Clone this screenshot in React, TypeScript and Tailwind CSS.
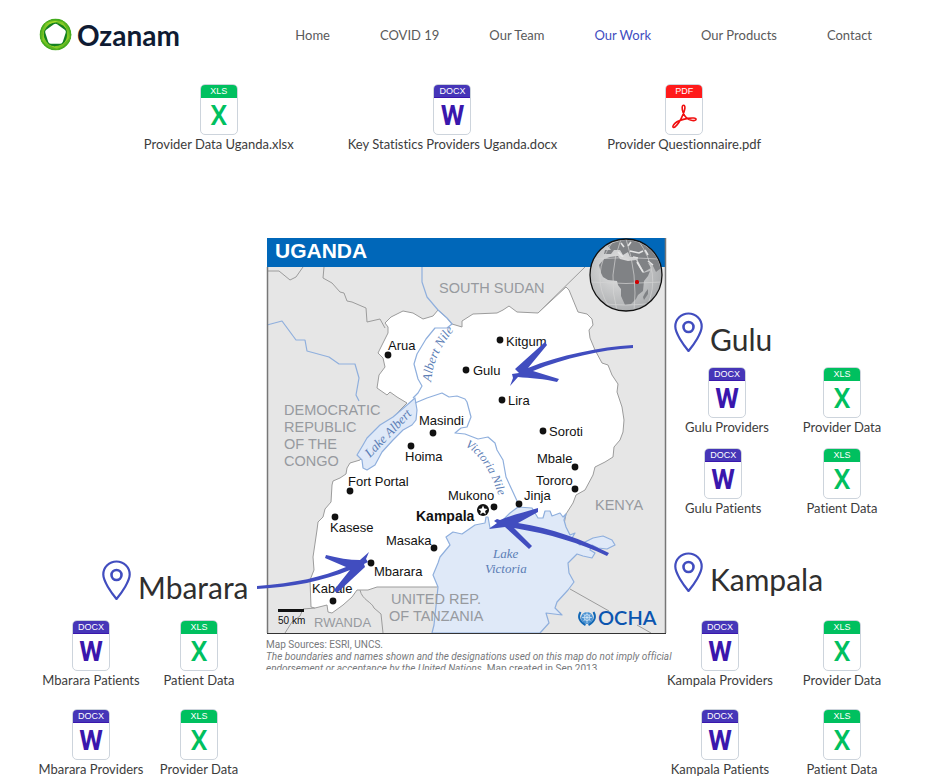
type Kind = "DOCX" | "XLS" | "PDF";

const band: Record<Kind, string> = {
  DOCX: "bg-[#4636b8] shadow-[inset_0_-1px_#3a17ad]",
  XLS: "bg-[#00c05f]",
  PDF: "bg-[#ff1a1a]",
};

function FileIcon({ kind }: { kind: Kind }) {
  return (
    <span className="flex h-[51px] w-[38px] flex-col overflow-hidden rounded-[5px] border border-[#cdd4dc] bg-white">
      <span
        className={`-mx-px -mt-px flex h-[14px] shrink-0 items-center justify-center font-['Liberation_Sans',Arial,sans-serif] text-[9px] leading-[14px] text-white ${band[kind]}`}
      >
        {kind}
      </span>
      <span className="flex flex-1 items-center justify-center font-['Roboto',sans-serif] text-[27px] leading-[30px]">
        {kind === "DOCX" && <span className="font-bold text-[#3a17ad]">W</span>}
        {kind === "XLS" && <span className="font-medium text-[#00c05f]">X</span>}
        {kind === "PDF" && (
          <svg width="26" height="26" viewBox="0 0 26 26" fill="none" stroke="#f01010" strokeWidth="1.6" strokeLinejoin="round" aria-hidden="true">
            <path d="M12.600 2.200c-1.800 0-1.800 3.600-.5 7.200 1.300 3.500 4.300 6.900 8.200 7.900 2.400.6 4.800.2 4.800-1 0-1.400-3.800-1.700-8.300-.9-4.500.8-10.300 2.500-12.900 5-1.900 1.800-2.600 3.700-1.500 4 1.700.4 5.400-4.300 7.600-8.600 2-4 3.700-8 3.900-10.700.1-1.800-.4-2.900-1.300-2.900z" />
          </svg>
        )}
      </span>
    </span>
  );
}

function FileLink({ kind, name }: { kind: Kind; name: string }) {
  return (
    <a href="#" className="flex flex-col items-center text-[13px] leading-[18px] whitespace-nowrap text-[#3c3c3c]">
      <FileIcon kind={kind} />
      {name}
    </a>
  );
}

function PlaceTitle({ name }: { name: string }) {
  return (
    <div className="flex items-start gap-[7px]">
      <svg width="29" height="40" viewBox="0 0 29 40" fill="none" stroke="#414dbf" strokeWidth="2.200" aria-hidden="true">
        <path d="M14.500 1.500C7.200 1.500 1.300 7.400 1.300 14.500c0 3.300 1.700 7.300 4.500 12.200 2.600 4.400 5.800 8.800 8.700 12.300 2.900-3.500 6.100-7.900 8.700-12.300 2.800-4.900 4.500-8.900 4.500-12.200 0-7.100-5.900-13-13.200-13z" />
        <circle cx="14.500" cy="15" r="5" strokeWidth="2.600" />
      </svg>
      <h2 className="pt-[7px] text-[30px] leading-[40px] text-[#2f2f2f]">{name}</h2>
    </div>
  );
}

const blades = [0, 72, 144, 216, 288];

function Logo() {
  return (
    <a href="#" className="flex items-center gap-[5px] text-[28px] leading-[32px] font-bold text-[#0f1b33]">
      <svg width="33" height="33" viewBox="0 0 33 33" aria-hidden="true">
        <defs>
          <linearGradient id="lit" x1="0" y1="0" x2="1" y2="0.6">
            <stop offset="0" stopColor="#3fa51d" />
            <stop offset="1" stopColor="#a6dc2a" />
          </linearGradient>
          <clipPath id="disc"><circle cx="16.500" cy="16.500" r="16" /></clipPath>
        </defs>
        <g clipPath="url(#disc)">
          <circle cx="16.500" cy="16.500" r="16" fill="#43ab1d" />
          {blades.map((a) => (
            <g key={a} transform={`rotate(${a} 16.500 16.500)`}>
              <path d="M2 8Q11-1 24 4Q29 8 30 15Q24 5 15.500 4.500Q8 4.500 2 8z" fill="url(#lit)" />
              <path d="M10 6.500Q17 3 24 7.500Q27 10 28.500 15L25 12.500Q18 6 10 6.500z" fill="#148021" />
            </g>
          ))}
        </g>
        <path d="M16.500 8.500l7.600 5.500-2.900 9h-9.400l-2.900-9z" fill="#fff" stroke="#fff" strokeWidth="5.500" strokeLinejoin="round" />
      </svg>
      Ozanam
    </a>
  );
}

const towns: [string, number, number, number, number][] = [
  ["Arua", 388, 355, 388, 350],
  ["Kitgum", 500, 340, 506, 346],
  ["Gulu", 466, 370, 473, 375],
  ["Lira", 502, 400, 508, 405],
  ["Masindi", 433, 433, 419, 425],
  ["Soroti", 543, 431, 549, 436],
  ["Hoima", 411, 446, 405, 461],
  ["Mbale", 575, 467, 537, 463],
  ["Tororo", 575, 489, 536, 485],
  ["Fort Portal", 350, 491, 348, 486],
  ["Kasese", 335, 517, 330, 532],
  ["Mukono", 494, 507, 448, 500],
  ["Jinja", 519, 504, 524, 500],
  ["Masaka", 434, 548, 386, 545],
  ["Mbarara", 371, 563, 374, 576],
  ["Kabale", 333, 601, 312, 593],
];

const countries: [string, number, number][] = [
  ["SOUTH SUDAN", 439, 293],
  ["DEMOCRATIC", 284, 415],
  ["REPUBLIC", 284, 432],
  ["OF THE", 284, 449],
  ["CONGO", 284, 466],
  ["KENYA", 595, 510],
  ["UNITED REP.", 391, 604],
  ["OF TANZANIA", 389, 621],
];

function UgandaMap() {
  return (
    <svg
      viewBox="266 238 400 396"
      className="relative block w-full overflow-visible"
      fontFamily="'Liberation Sans', Arial, sans-serif"
      role="img"
      aria-label="Map of Uganda"
    >
      <rect x="267" y="238" width="399" height="395" fill="#e6e6e6" />
      <g fill="none" stroke="#9c9c9c" strokeWidth="1">
        <path d="M267 271L279 271L290 280L296 277L303 267M324 267L323 278L332 283L340 292L344 293L347 301L352 302L366 308L367 322L380 319L385 328" />
        <path d="M538 313L585 267M360 590C362 600 372 602 374 608L381 614L383 633M315 608L303 609L300 616L292 622L285 633M570 589L609 611M637 625L651 633" />
      </g>
      <path
        d="M388 327L385 323L391 317L403 311L413 313L423 319L433 316L438 310L447 318L452 324L462 327L462 321L473 314L497 313L503 310L509 306L517 312L538 313L566 287L569 290L578 312L587 314L592 319L593 325L589 330L590 338L595 350L602 363L608 365L612 375L618 384L617 392L622 407L624 420L623 432L620 440L614 447L613 457L605 462L595 467L593 475L585 490L576 495L573 503L566 514L560 545L480 560L437 587L377 587L368 590L357 590L352 597L343 605L332 613L328 612L327 605L315 608L311 607L310 580L314 570L313 557L317 530L318 522L323 517L325 509L331 502L332 485L333 481L340 478L346 474L347 468L350 463L360 460L400 410L407 403L397 397L390 392L387 395L377 388L379 375L385 367L383 358L378 353L382 345L388 333z"
        fill="#fff"
        stroke="#9c9c9c"
      />
      <g fill="#dfe9f8" stroke="#8fafdd" strokeWidth="1.200" strokeLinejoin="round">
        <path d="M357 455L363 445L367 438L380 425L393 417L407 405L415 398L417 410L416 420L412 425L403 430L393 440L382 452L375 465L367 470L363 468L362 460z" />
        <path d="M432 633L434 625L438 587L433 575L438 563L440 557L450 545L446 537L453 532L462 534L475 525L485 523L486 517L488 517L490 528L500 523L510 513L518 507L532 508L535 513L538 518L543 518L545 511L550 511L552 516L560 513L563 517L566 514L564 520L566 527L570 535L575 533L572 538L580 545L585 542L593 538L603 536L612 540L615 545L607 549L598 548L592 545L590 550L595 553L592 558L583 556L577 554L568 563L569 573L574 582L568 590L557 602L555 608L562 615L546 613L549 623L540 633z" />
        <path fill="none" d="M422 267V282L427 297L438 310L447 318L452 324L447 328L435 328L426 339L417 354L414 364L418 379L422 386L418 393L413 398M415 403L427 398L442 393L449 397L457 396L465 399L467 402L471 417L467 427L461 428L455 433L465 434L478 439L488 437L495 443L497 450L503 460L506 477L512 490L518 503" />
        <path fill="none" d="M267 325L282 321L296 340L305 340L307 351L329 357L339 364L355 364L359 378L356 395L359 401" />
      </g>
      <g fill="#979a9f" fontSize="14.500">
        {countries.map(([name, x, y]) => (
          <text key={name} x={x} y={y}>{name}</text>
        ))}
        <text x="314" y="627" fontSize="13">RWANDA</text>
      </g>
      <g fill="#5b7db5" fontFamily="'Liberation Serif', serif" fontStyle="italic" fontSize="13">
        <path id="albert-nile" d="M431 382Q434 352 456 328" fill="none" />
        <path id="victoria-nile" d="M465 446Q490 460 502 508" fill="none" />
        <text><textPath href="#albert-nile">Albert Nile</textPath></text>
        <text fontSize="12"><textPath href="#victoria-nile">Victoria Nile</textPath></text>
        <text transform="translate(370 458) rotate(-46)">Lake Albert</text>
        <text x="493" y="558">Lake</text>
        <text x="485" y="573">Victoria</text>
      </g>
      <g fill="#111" fontSize="13">
        {towns.map(([name, cx, cy, x, y]) => (
          <g key={name}>
            <circle cx={cx} cy={cy} r="3.400" />
            <text x={x} y={y}>{name}</text>
          </g>
        ))}
        <text x="416" y="521" fontSize="14" fontWeight="700">Kampala</text>
        <circle cx="483" cy="510" r="6" />
        <path d="M483 505.500l1.300 3.100 3.300.3-2.500 2.200.8 3.300-2.900-1.800-2.900 1.800.8-3.300-2.500-2.200 3.300-.3z" fill="#fff" />
        <rect x="278" y="609" width="26" height="3" />
        <text x="278" y="624" fontSize="10">50 km</text>
      </g>
      <g>
        <circle cx="587" cy="618" r="6" fill="#4a92d2" />
        <path d="M580.500 612c-3 5-1 10 5 13M593.500 612c3 5 1 10-5 13" fill="none" stroke="#1167b5" strokeWidth="2" />
        <circle cx="587" cy="617.500" r="3" fill="none" stroke="#d9e9f7" strokeWidth="0.800" />
        <path d="M582 617.500h10M587 612v11M583.500 614l7 7M590.500 614l-7 7" stroke="#d9e9f7" strokeWidth="0.700" />
        <text x="598" y="625" fill="#0b55b0" fontFamily="Lato, sans-serif" fontSize="20" fontWeight="600">OCHA</text>
      </g>
      <rect x="267" y="238" width="399" height="29" fill="#0067b9" />
      <text x="275" y="258" fill="#fff" fontSize="21" fontWeight="700">UGANDA</text>
      <path d="M267.500 267v366M665.500 238v395" stroke="#777" strokeWidth="1.500" />
      <path d="M267 633.500h399" stroke="#333" />
      <defs>
        <radialGradient id="sea" cx="0.4" cy="0.4" r="0.65">
          <stop offset="0" stopColor="#e6e6e6" />
          <stop offset="1" stopColor="#a9abad" />
        </radialGradient>
        <clipPath id="globe"><circle cx="626" cy="275" r="35" /></clipPath>
      </defs>
      <circle cx="626" cy="275" r="36" fill="url(#sea)" stroke="#111" strokeWidth="1.300" />
      <g clipPath="url(#globe)">
        <g fill="#808285">
          <path d="M599 265L604 259L610 257L618 256L620 259L624 260L628 261L636 260L640 268L643 273L650 271L648 276L644 281L643 291L638 295L636 299L631 304L625 305L621 296L621 289L618 285L617 281L608 280L603 277L601 273z" />
          <path d="M645 293L648 289L648 294L644 300L643 297z" />
          <path d="M604 254L605 250L611 250L608 246L613 243L623 240L639 240L650 248L658 258L661 268L656 272L652 264L648 263L651 268L644 272L638 261L637 257L630 257L628 252L623 255L620 250L614 250L611 254z" />
        </g>
        <path d="M618 252l5 5M630 251l9 2 4-2M633 257l5 1M645 250l3 5M621 243l3 4M631 242l-3 4M637 262l6 10M648 261l5 4" fill="none" stroke="#e6e6e6" strokeWidth="1.600" />
        <path d="M590 282q36 3 72 0M594 259q32-3 64 0M598 303q28 4 56 0M626 239q12 36 8 72M621 239q-14 36-4 72M613 241q-24 34-4 66M638 240q24 34 9 66" fill="none" stroke="#d4d4d4" strokeWidth="0.700" />
      </g>
      <rect x="635" y="280" width="4" height="4" rx="1.500" fill="#d00000" />
      <g fill="#414dbf">
        <path d="M633 345L633 348C600 350 565 358 533 371L559 379L557 382C545 379 530 378 518 377L510 386L513 378L512 374L519 373L515 369L545 342L547 345L528 368C560 355 600 347 633 345z" />
        <path d="M609 553L607 556C580 543 550 534 514 528L532 546L529 549L505 527L489 529L497 523L494 521L497 519L500 520C512 515 525 512 538 508L538 512L518 523C552 528 583 540 609 553z" />
        <path d="M257 586C295 583 323 577 346 567L325 558L326 555C338 558 349 560 360 560L369 552L366 559L368 562L364 564L365 567L337 593L334 590L350 570C323 581 293 587 257 589z" />
      </g>
    </svg>
  );
}

const nav = ["Home", "COVID 19", "Our Team", "Our Work", "Our Products", "Contact"];

export default function App() {
  return (
    <div className="min-h-screen bg-white font-['Lato',sans-serif] [font-variant-ligatures:none]">
      <header className="flex items-center justify-between pt-[18px] pr-[60px] pl-[39px]">
        <Logo />
        <nav className="flex gap-[50px] text-[13px] leading-[18px] whitespace-nowrap text-[#5a5a5a]">
          {nav.map((item) => (
            <a key={item} href="#" className={item === "Our Work" ? "text-[#414dbf]" : ""}>
              {item}
            </a>
          ))}
        </nav>
      </header>

      <section className="flex justify-center gap-[50px] pt-[33px] pr-[27px]">
        <FileLink kind="XLS" name="Provider Data Uganda.xlsx" />
        <div className="pl-1"><FileLink kind="DOCX" name="Key Statistics Providers Uganda.docx" /></div>
        <FileLink kind="PDF" name="Provider Questionnaire.pdf" />
      </section>

      <main className="grid grid-cols-[1fr_400px_1fr] items-start pt-[85px]">
        <section className="pt-[322px] pl-[37px]">
          <div className="pl-[65px]">
            <PlaceTitle name="Mbarara" />
          </div>
          <div className="grid grid-cols-[108px_108px] justify-items-center gap-y-5 pt-[13px]">
            <FileLink kind="DOCX" name="Mbarara Patients" />
            <FileLink kind="XLS" name="Patient Data" />
            <FileLink kind="DOCX" name="Mbarara Providers" />
            <FileLink kind="XLS" name="Provider Data" />
          </div>
        </section>

        <figure className="relative z-10">
          <UgandaMap />
          <figcaption className="h-9 overflow-x-visible overflow-y-clip pt-[5px] font-['Roboto',sans-serif] text-[10px] leading-[12px] whitespace-nowrap text-[#77797c]">
            Map Sources: ESRI, UNCS.
            <br />
            <em>The boundaries and names shown and the designations used on this map do not imply official</em>
            <br />
            <em>endorsement or acceptance by the United Nations.</em> Map created in Sep 2013.
          </figcaption>
        </figure>

        <section className="pt-[74px]">
          <div className="pl-2">
            <PlaceTitle name="Gulu" />
          </div>
          <div className="grid grid-cols-[108px_136px] gap-y-3 pt-2">
            <div className="flex justify-start pl-[19px]"><FileLink kind="DOCX" name="Gulu Providers" /></div>
            <FileLink kind="XLS" name="Provider Data" />
            <div className="flex justify-start pl-[19px]"><FileLink kind="DOCX" name="Gulu Patients" /></div>
            <FileLink kind="XLS" name="Patient Data" />
          </div>
          <div className="pt-[35px] pl-2">
            <PlaceTitle name="Kampala" />
          </div>
          <div className="grid grid-cols-[108px_136px] justify-items-center gap-y-5 pt-[21px]">
            <FileLink kind="DOCX" name="Kampala Providers" />
            <FileLink kind="XLS" name="Provider Data" />
            <FileLink kind="DOCX" name="Kampala Patients" />
            <FileLink kind="XLS" name="Patient Data" />
          </div>
        </section>
      </main>
    </div>
  );
}
